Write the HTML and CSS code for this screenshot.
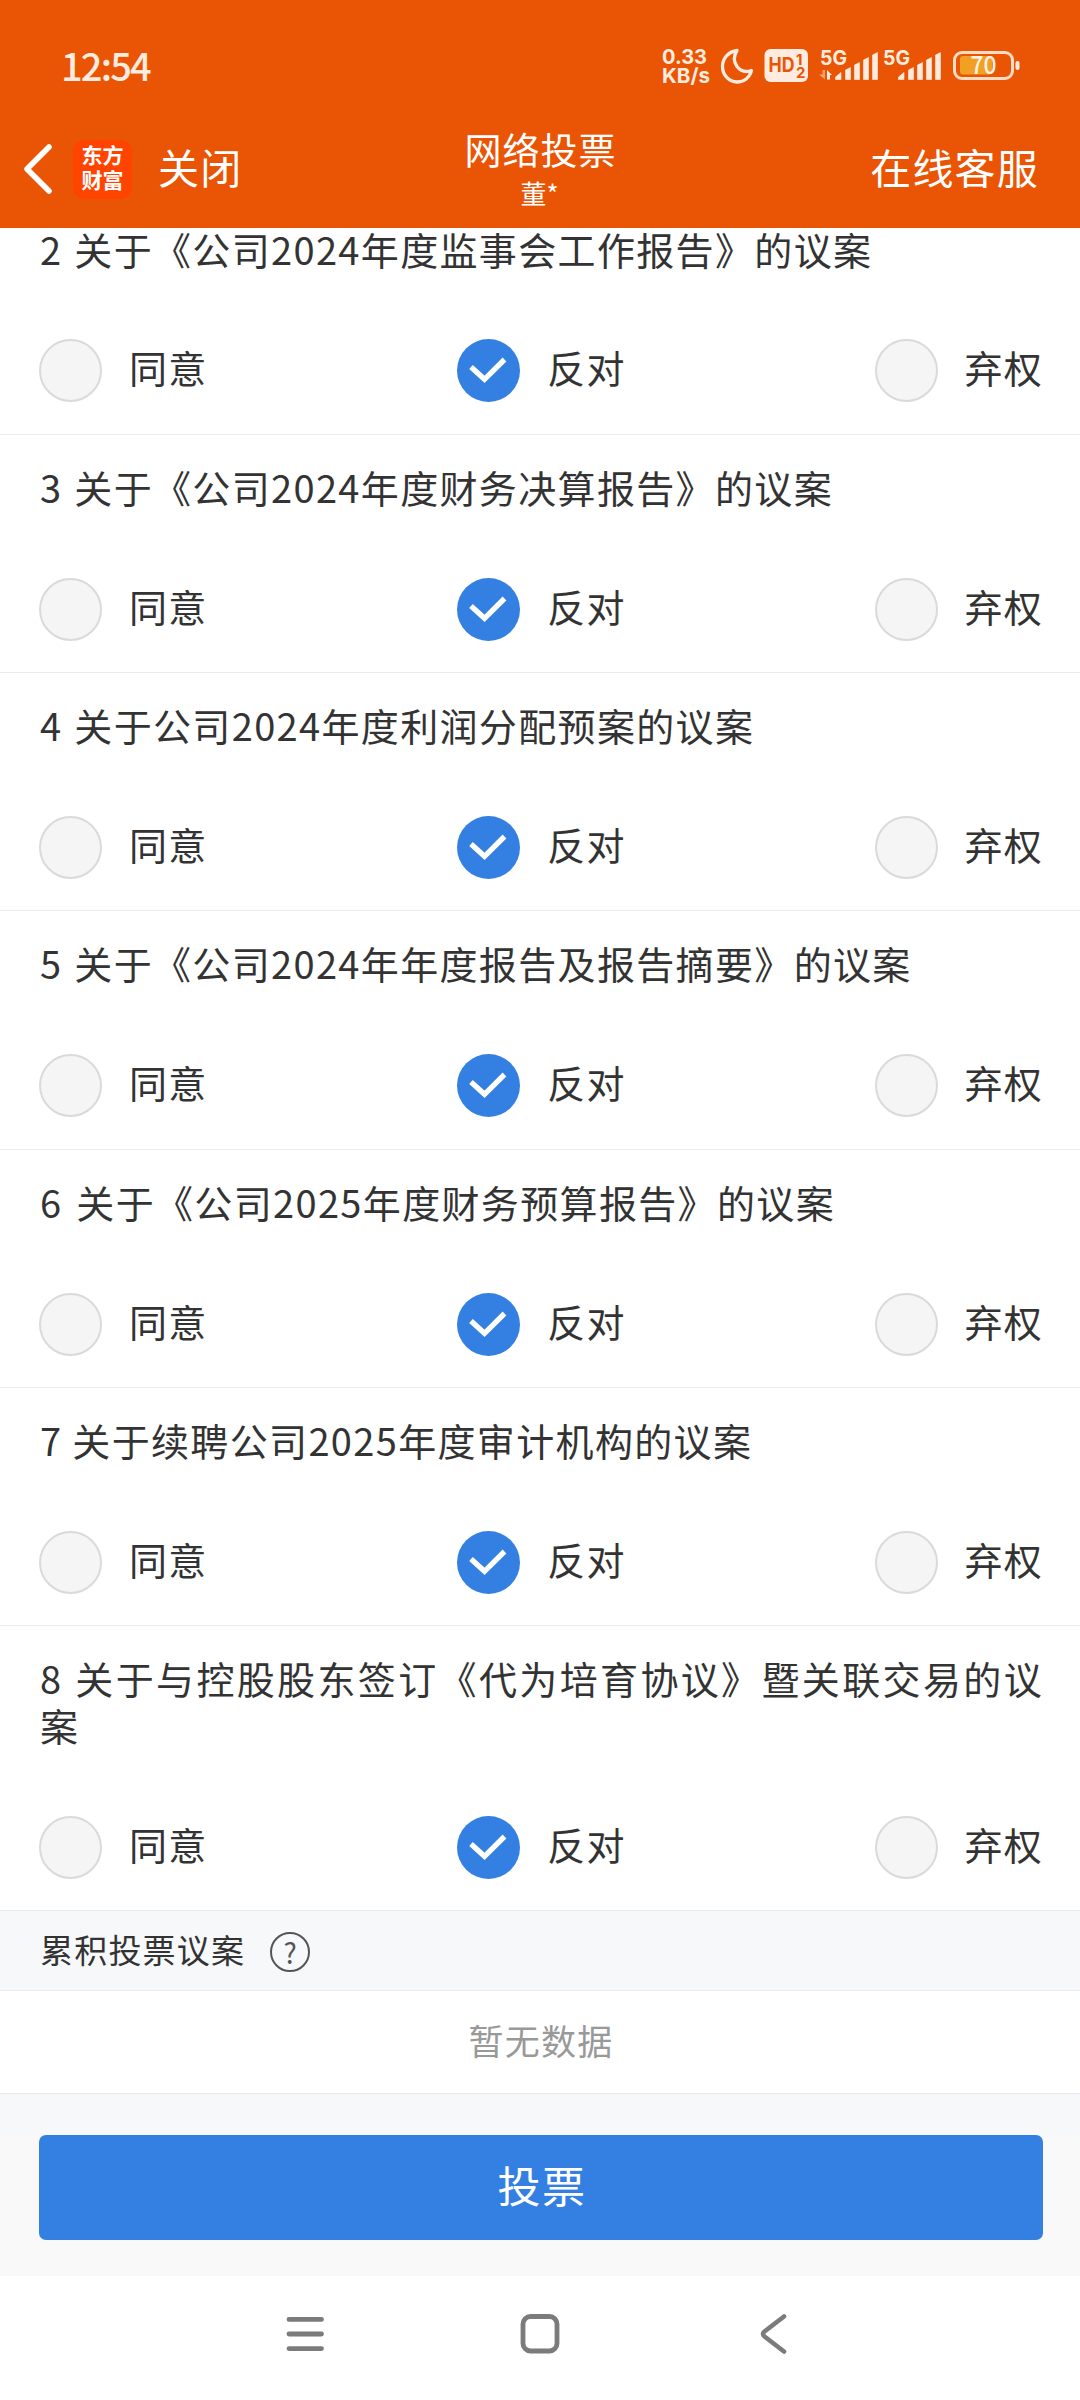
FILE: index.html
```html
<!DOCTYPE html>
<html lang="zh-CN">
<head>
<meta charset="utf-8">
<title>网络投票</title>
<link rel="stylesheet" href="styles.css">
</head>
<body>
<svg class="defs" width="0" height="0">
  <symbol id="tick" viewBox="0 0 63 63"><path d="M14 28 L27.5 40.300 L47.500 20.500" fill="none" stroke="#fff" stroke-width="5.300"/></symbol>
</svg>
<header class="top">
  <div class="status">
    <span class="clock">12:54</span>
    <svg class="indicators" width="360" height="44" viewBox="660 44 360 44">
      <g fill="#ffebdf">
        <g class="rate">
          <text x="662" y="64" textLength="45" lengthAdjust="spacingAndGlyphs">0.33</text>
          <text x="662" y="82.500" textLength="48" lengthAdjust="spacingAndGlyphs">KB/s</text>
        </g>
        <path d="M737 50.500 C729 51.500 722.500 58 722.500 66.500 C722.500 75 729 82 737 82 C744 82 749.500 77.500 751.500 70.500 C746 72.500 740.500 71 737 66.500 C733.500 61.500 733.500 56 737 50.500 Z" fill="none" stroke="#ffebdf" stroke-width="3.300" stroke-linejoin="round"/>
        <rect x="764.500" y="49" width="43.500" height="33" rx="6"/>
        <g class="fiveg">
          <text x="820" y="64.500" textLength="27" lengthAdjust="spacingAndGlyphs">5G</text>
          <text x="883" y="64.500" textLength="27" lengthAdjust="spacingAndGlyphs">5G</text>
        </g>
        <path d="M827 70 L832 75 L830 75 V79.500 H827 Z"/>
        <path d="M825 79.500 L819 74.500 H822.500 V70 H825 Z" opacity=".5"/>
        <path id="bars" d="M835.500 79.500 V77 L841 72.500 V79.500 Z M845.500 79.500 V70 L850.500 67.500 V79.500 Z M854.500 79.500 V65 L859.500 62.500 V79.500 Z M863.500 79.500 V60 L868.500 57.500 V79.500 Z M872.500 79.500 V55 L877.500 52.500 V79.500 Z" stroke="#ffebdf" stroke-width=".6" stroke-linejoin="round"/>
        <use href="#bars" x="63"/>
        <rect x="1015.500" y="61" width="4" height="9" rx="2"/>
      </g>
      <g class="hd" fill="#e95504">
        <text x="768.500" y="72" font-size="19.500" textLength="26" lengthAdjust="spacingAndGlyphs">HD</text>
        <text x="796" y="64.500" font-size="15">1</text>
        <text x="796" y="78" font-size="15">2</text>
      </g>
      <rect x="960" y="56" width="32" height="18.500" rx="3" fill="#f2a024"/>
      <rect x="954.500" y="52.500" width="58" height="26" rx="7.500" fill="none" stroke="#ffdcc4" stroke-width="3"/>
      <text class="level" x="970.500" y="74" textLength="26" lengthAdjust="spacingAndGlyphs">70</text>
    </svg>
  </div>
  <div class="bar">
    <div class="left">
      <svg class="back" width="30" height="52" viewBox="0 0 30 52"><path d="M26 4 L4 26 L26 48" fill="none" stroke="#fff" stroke-width="5.600" stroke-linecap="round" stroke-linejoin="round"/></svg>
      <div class="logo"><span>东方</span><span>财富</span></div>
      <span class="action">关闭</span>
    </div>
    <div class="heading"><span class="name">网络投票</span><span class="user">董*</span></div>
    <span class="action service">在线客服</span>
  </div>
</header>
<main>
  <section class="item first">
    <h2>2 关于《公司2024年度监事会工作报告》的议案</h2>
    <div class="options">
      <div class="option"><i class="radio"></i><span>同意</span></div>
      <div class="option"><svg class="radio on"><use href="#tick"/></svg><span>反对</span></div>
      <div class="option"><i class="radio"></i><span>弃权</span></div>
    </div>
  </section>
  <section class="item">
    <h2>3 关于《公司2024年度财务决算报告》的议案</h2>
    <div class="options">
      <div class="option"><i class="radio"></i><span>同意</span></div>
      <div class="option"><svg class="radio on"><use href="#tick"/></svg><span>反对</span></div>
      <div class="option"><i class="radio"></i><span>弃权</span></div>
    </div>
  </section>
  <section class="item">
    <h2>4 关于公司2024年度利润分配预案的议案</h2>
    <div class="options">
      <div class="option"><i class="radio"></i><span>同意</span></div>
      <div class="option"><svg class="radio on"><use href="#tick"/></svg><span>反对</span></div>
      <div class="option"><i class="radio"></i><span>弃权</span></div>
    </div>
  </section>
  <section class="item">
    <h2>5 关于《公司2024年年度报告及报告摘要》的议案</h2>
    <div class="options">
      <div class="option"><i class="radio"></i><span>同意</span></div>
      <div class="option"><svg class="radio on"><use href="#tick"/></svg><span>反对</span></div>
      <div class="option"><i class="radio"></i><span>弃权</span></div>
    </div>
  </section>
  <section class="item">
    <h2 class="wide">6 关于《公司2025年度财务预算报告》的议案</h2>
    <div class="options">
      <div class="option"><i class="radio"></i><span>同意</span></div>
      <div class="option"><svg class="radio on"><use href="#tick"/></svg><span>反对</span></div>
      <div class="option"><i class="radio"></i><span>弃权</span></div>
    </div>
  </section>
  <section class="item">
    <h2 class="narrow">7 关于续聘公司2025年度审计机构的议案</h2>
    <div class="options">
      <div class="option"><i class="radio"></i><span>同意</span></div>
      <div class="option"><svg class="radio on"><use href="#tick"/></svg><span>反对</span></div>
      <div class="option"><i class="radio"></i><span>弃权</span></div>
    </div>
  </section>
  <section class="item tall">
    <h2>8 关于与控股股东签订《代为培育协议》暨关联交易的议案</h2>
    <div class="options">
      <div class="option"><i class="radio"></i><span>同意</span></div>
      <div class="option"><svg class="radio on"><use href="#tick"/></svg><span>反对</span></div>
      <div class="option"><i class="radio"></i><span>弃权</span></div>
    </div>
  </section>
  <div class="group"><span>累积投票议案</span><span class="help">?</span></div>
  <div class="empty">暂无数据</div>
  <div class="gap"></div>
</main>
<div class="submit"><button>投票</button></div>
<nav>
  <svg width="40" height="44" viewBox="0 0 40 44"><path d="M4 7.400 H36.500 M4 22 H36.500 M4 36.600 H36.500" stroke="#7b7b7b" stroke-width="4.800" stroke-linecap="round"/></svg>
  <svg width="44" height="44" viewBox="0 0 44 44"><rect x="5" y="4.500" width="34" height="34.500" rx="7.500" fill="none" stroke="#7b7b7b" stroke-width="4.800"/></svg>
  <svg width="30" height="44" viewBox="0 0 30 44"><path d="M26 4.500 L6.500 19.500 Q3.500 22 6.500 24.500 L26 39.500" fill="none" stroke="#7b7b7b" stroke-width="4.600" stroke-linecap="round"/></svg>
</nav>
</body>
</html>
```
FILE: styles.css
```css
* { box-sizing: border-box; }
body {
  margin: 0;
  width: 1080px;
  height: 2400px;
  overflow: hidden;
  display: flex;
  flex-direction: column;
  background: #fff;
  color: #333;
  font-family: "Noto Sans CJK SC", sans-serif;
}
.defs { position: absolute; }

.top { height: 228px; flex: none; background: #e95504; color: #fff; }
.status { height: 114px; padding: 44px 60px 0 61px; display: flex; justify-content: space-between; }
.clock { font-size: 38px; font-weight: 500; line-height: 42px; color: #ffebdf; letter-spacing: -1.800px; }
.indicators { display: block; overflow: visible; font-family: Inter, sans-serif; font-weight: 700; }
.rate { font-size: 20.500px; }
.fiveg { font-size: 20px; }
.level { font-family: "Noto Sans CJK SC", sans-serif; font-size: 24.500px; font-weight: 500; fill: #fff3e6; }

.bar { height: 114px; display: grid; grid-template-columns: 1fr auto 1fr; padding: 0 41px 0 23px; }
.left { display: flex; align-items: center; height: 110px; }
.logo {
  width: 59px; height: 59px; margin-left: 20px; border-radius: 12px; background: #ff4400;
  display: flex; flex-direction: column; justify-content: center; padding-bottom: 4px;
  font-size: 21px; line-height: 25px; font-weight: 700; text-align: center;
}
.action { font-size: 41px; line-height: 104px; height: 110px; letter-spacing: 1.200px; }
.left .action { margin-left: 26px; }
.service { justify-self: end; }
.heading { display: flex; flex-direction: column; align-items: center; padding: 11px 0 0 19px; }
.name { font-size: 37px; line-height: 48px; letter-spacing: 1px; }
.user { font-size: 26px; line-height: 38px; padding: 1px 2px 0 0; }

main { flex: none; display: flow-root; }
.item { display: flow-root; height: 238.200px; padding: 28px 37px 0 39px; border-bottom: 1px solid #e9eaec; }
.item.first { height: 207px; padding-top: 0; }
.item.first h2 { margin: -3px 0 67px; }
.item.tall { height: 285px; }
h2 { margin: 0 0 68px; padding-left: 1px; font-size: 38px; font-weight: 400; line-height: 47px; letter-spacing: 1.350px; word-spacing: 2px; text-align: justify; }
h2.wide { word-spacing: 4px; }
h2.narrow { word-spacing: 0; }
.options { display: flex; justify-content: space-between; }
.option { display: flex; align-items: flex-start; font-size: 38px; line-height: 55px; letter-spacing: 1.300px; }
.radio { width: 63px; height: 63px; flex: none; margin-right: 27px; border: 2px solid #dadada; border-radius: 50%; background: #f5f5f5; }
.option:last-child .radio { margin-right: 26px; }
.radio.on { border: 0; background: #3480e2; }

.group { height: 80px; padding-left: 40px; display: flex; align-items: center; background: #f7f8fa; border-bottom: 1px solid #e9eaec; font-size: 33px; letter-spacing: 1.200px; }
.group > span:first-child { padding-bottom: 2px; }
.help { width: 40px; height: 40px; margin: 3px 0 0 25px; border: 2px solid #555; border-radius: 50%; font: 28px/37px "Noto Sans CJK SC", sans-serif; text-align: center; color: #555; letter-spacing: 0; }
.empty { height: 103px; padding-left: 2px; border-bottom: 1px solid #e6e9ed; line-height: 98px; text-align: center; font-size: 35px; letter-spacing: 1.200px; color: #999; }
.gap { height: 41px; background: #f7f8fa; }
.submit { height: 141px; flex: none; padding: 0 37px 0 39px; background: #f9f9f9; }
button { display: block; width: 100%; height: 105px; padding: 0 0 6px 2px; border: 0; border-radius: 7px; background: #3480e2; color: #fff; font: 43px/99px "Noto Sans CJK SC", sans-serif; letter-spacing: 1.500px; }
nav { height: 124px; display: grid; grid-template-columns: 40px 44px 30px; column-gap: 193px; padding: 36px 0 0 285px; }
nav svg:last-child { margin-left: 3px; }
```
